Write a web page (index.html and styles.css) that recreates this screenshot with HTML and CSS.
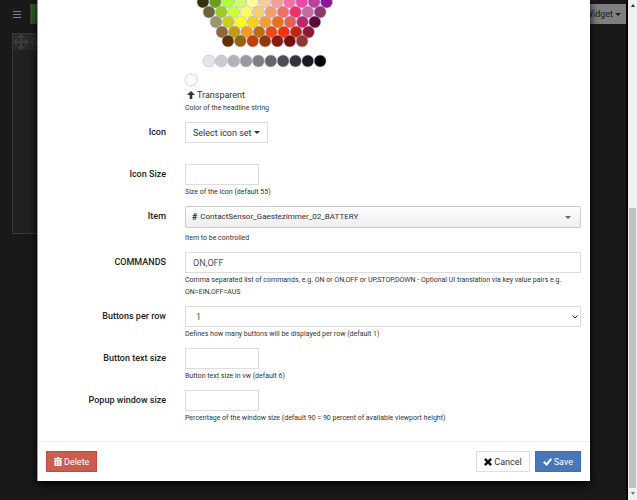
FILE: index.html
```html
<!doctype html>
<html lang="en">
<head>
    <meta charset="UTF-8">
    <meta name="viewport" content="width=device-width, initial-scale=1.0">
    <title>Widget settings</title>
    <link rel="stylesheet" href="styles.css">
</head>
<body>
<div class="page">
    <header class="navbar">
        <button type="button" class="menu" aria-label="Menu"><span></span><span></span><span></span></button>
        <button type="button" class="nav-run" aria-label="Run"></button>
        <button type="button" class="nav-add">Widget <i class="caret"></i></button>
    </header>
    <section class="widget">
        <div class="widget-head">
            <svg width="16" height="16" viewBox="0 0 16 16"><path d="M8 0l4 4h-3v3h3V4l4 4-4 4V9H9v3h3l-4 4-4-4h3V9H4v3L0 8l4-4v3h3V4H4z"/></svg>
            <span>Gaestezimmer</span>
        </div>
    </section>
</div>

<form class="modal">
    <div class="modal-body">
        <div class="row">
            <span class="label"></span>
            <div class="field">
                <svg class="palette" width="150" height="89" viewBox="0 0 150 89">
                    <g id="colors"></g>
                </svg>
                <button type="button" class="transparent">
                    <svg width="8" height="9" viewBox="0 0 8 9"><path d="M4 0l4 4H5.300v4H2.700V4H0z"/></svg>
                    Transparent
                </button>
                <p class="help">Color of the headline string</p>
            </div>
        </div>
        <div class="row">
            <label for="icon">Icon</label>
            <div class="field field-icon">
                <button type="button" id="icon" class="btn">Select icon set <i class="caret"></i></button>
            </div>
        </div>
        <div class="row">
            <label for="size">Icon Size</label>
            <div class="field">
                <input type="text" id="size" class="control short">
                <p class="help">Size of the icon (default 55)</p>
            </div>
        </div>
        <div class="row">
            <label for="item">Item</label>
            <div class="field">
                <button type="button" id="item" class="item">
                    <b>#</b>
                    <span>ContactSensor_Gaestezimmer_02_BATTERY</span>
                    <i class="caret"></i>
                </button>
                <p class="help">Item to be controlled</p>
            </div>
        </div>
        <div class="row">
            <label for="commands">COMMANDS</label>
            <div class="field">
                <input type="text" id="commands" class="control" value="ON,OFF">
                <p class="help">Comma separated list of commands, e.g. ON or ON,OFF or UP,STOP,DOWN - Optional UI translation via key value pairs e.g. ON=EIN,OFF=AUS</p>
            </div>
        </div>
        <div class="row">
            <label for="columns">Buttons per row</label>
            <div class="field">
                <div class="select">
                    <select id="columns" class="control"><option>1</option><option>2</option><option>3</option></select>
                    <svg width="6" height="4" viewBox="0 0 6 4"><path d="M.5.500L3 3 5.500.500"/></svg>
                </div>
                <p class="help">Defines how many buttons will be displayed per row (default 1)</p>
            </div>
        </div>
        <div class="row">
            <label for="text">Button text size</label>
            <div class="field">
                <input type="text" id="text" class="control short">
                <p class="help">Button text size in vw (default 6)</p>
            </div>
        </div>
        <div class="row">
            <label for="popup">Popup window size</label>
            <div class="field">
                <input type="text" id="popup" class="control short">
                <p class="help">Percentage of the window size (default 90 = 90 percent of available viewport height)</p>
            </div>
        </div>
    </div>
    <div class="modal-footer">
        <button type="button" class="btn btn-danger">
            <svg width="8" height="10" viewBox="0 0 8 10"><path d="M3 0h2v1h3v1.500H0V1h3zM.5 3h7v6h-7z"/><path class="bars" d="M2.500 4v4M4 4v4M5.500 4v4"/></svg>
            Delete
        </button>
        <button type="button" class="btn btn-cancel">
            <svg width="8" height="8" viewBox="0 0 8 8"><path d="M0 1.800L1.800 0 4 2.200 6.200 0 8 1.800 5.800 4 8 6.200 6.200 8 4 5.800 1.800 8 0 6.200 2.200 4z"/></svg>
            Cancel
        </button>
        <button type="submit" class="btn btn-primary">
            <svg width="9" height="8" viewBox="0 0 9 8"><path d="M0 4.500L1.500 3l2 2L7.500 0 9 1.400 3.700 8z"/></svg>
            Save
        </button>
    </div>
</form>

<div class="scrollbar">
    <i class="arrow up"></i>
    <div class="thumb"></div>
    <i class="arrow down"></i>
</div>

<script>
    //one entry per line of swatches: x of the first one, y, colors
    var rows = [
        [18, 2, '#333300 #6f9d12 #adff3f #d2ff68 #ffff99 #f5ce9a #f3a09a #f56fa2 #f0479e #c23d9a #8c159b'],
        [24, 12, '#666633 #a0cc1a #ccff33 #ffff66 #f8ce68 #f39f68 #f07068 #ee3368 #c06d9c #8f3866'],
        [31, 22, '#999966 #cccc1a #ffff1f #f8d01c #f39d34 #f07010 #ee5c50 #bf2668 #5c0c34'],
        [37, 32, '#906835 #c49a10 #f49d1c #c06c0c #f04a0c #f03408 #bd280c #8c1a33'],
        [43, 41, '#5c3300 #906808 #bf4008 #8f3a04 #8c1a06 #741004 #8f3833'],
        [24, 61, '#e6e6e6 #cccccc #b3b3b3 #999999 #808080 #666666 #4d4d4d #333333 #1a1a1a #000000'],
        [6, 80, '#ffffff']
    ];
    var box = document.querySelector('#colors');

    for(var i=0;i<rows.length;i++){
        var colors = rows[i][2].split(' ');
        for(var j=0;j<colors.length;j++){
            var dot = document.createElementNS('http://www.w3.org/2000/svg','circle');
            dot.setAttribute('cx', rows[i][0] + j*12.35);
            dot.setAttribute('cy', rows[i][1]);
            dot.setAttribute('r', 6);
            dot.setAttribute('fill', colors[j]);
            box.appendChild(dot);
        }
    }
</script>
</body>
</html>
```

FILE: styles.css
```css
*{
    box-sizing: border-box;
}
body{
    margin:0;
    min-height:100vh;
    background-color: #191919;
    font:9px/12px Roboto,"Liberation Sans",sans-serif;
    color:#333;
    overflow: hidden;
}
button,input,select{
    font:inherit;
    color:inherit;
    margin:0;
}
button{
    cursor:pointer;
    white-space: nowrap;
}
svg{
    display: block;
    flex:none;
    fill:currentColor;
}
.caret{
    flex:none;
    border:3px solid transparent;
    border-top-color:currentColor;
    border-bottom:0;
}

/* dimmed dashboard */
.page{
    position: absolute;
    inset:0 9px 0 0;
    border-right:2px solid #050505;
}
.navbar{
    display: flex;
    align-items: center;
    gap:9px;
    padding:4px 0 0 13px;
}
.menu{
    display: grid;
    gap:2px;
    width:8px;
    border:0;
    padding:0;
    background: none;
}
.menu span{
    height:1px;
    background-color: #7b7f86;
}
.nav-run{
    width:30px;
    height:20px;
    border:1px solid #2b5220;
    background-color: #37602a;
}
.nav-add{
    display: flex;
    align-items: center;
    gap:2px;
    height:20px;
    margin-left: auto;
    border:0;
    padding:0 5px;
    background-color: #7f7f7f;
    color:#1c1c22;
}
.widget{
    width:300px;
    height:201px;
    margin:9px 12px;
    border:1px solid #35373b;
    background-color: #202020;
}
.widget-head{
    display: flex;
    align-items: center;
    gap:2px;
    height:16px;
    background-color: #292a2c;
    color:#3c3c3c;
}

/* dialog */
.modal{
    position: relative;
    margin:0 47px 0 37px;
    border-left:1px solid #999;
    background-color: #fff;
    box-shadow: 0 3px 9px #000;
}
.modal-body{
    padding:0 9px 9px 8px;
}
.row{
    display: grid;
    grid-template-columns: 120px 1fr;
    gap:19px;
    padding-bottom:8px;
}
.row label{
    padding-top:4px;
    text-align: right;
    font-weight: 500;
    color:#222;
}
.palette{
    stroke:#b4b4f0;
    stroke-width:.6;
}
.transparent{
    display: flex;
    align-items: center;
    gap:2px;
    height:12px;
    border:0;
    padding:0 2px;
    background: none;
}
.help{
    margin:0;
    padding-top:1px;
    font-size:7px;
    color:#333;
}
.btn{
    display: flex;
    align-items: center;
    gap:2px;
    height:21px;
    border:1px solid #ddd;
    padding:0 7px;
    background-color: #fff;
}
.field-icon{
    padding-bottom:13px;
}
.control{
    display: block;
    width:100%;
    height:21px;
    border:1px solid #ddd;
    border-radius:0;
    padding:0 7px;
    background-color: #fff;
    color:#555;
}
.short{
    width:74px;
}
.select{
    position: relative;
}
.select select{
    appearance: none;
    padding:0 10px;
}
.select svg{
    position: absolute;
    right:3px;
    top:9px;
    fill:none;
    stroke:#222;
}
.item{
    display: flex;
    align-items: center;
    gap:3px;
    width:100%;
    height:22px;
    margin-bottom:3px;
    border:1px solid #ccc;
    border-radius:2px;
    padding:0 9px 0 6px;
    background: linear-gradient(#fff,#eee);
    font-size:8px;
}
.item b{
    font-size:9px;
}
.item .caret{
    margin-left: auto;
    color:#666;
}
.modal-footer{
    display: flex;
    gap:5px;
    border-top:1px solid #eee;
    padding:9px 9px 9px 8px;
}
.btn-cancel{
    margin-left: auto;
}
.btn-cancel svg{
    color:#111;
}
.btn-danger{
    border-color:#c9463b;
    background-color: #ca5d50;
    color:#fff;
}
.bars{
    stroke:#ca5d50;
    stroke-width:.5;
}
.btn-primary{
    border-color:#3f6fb0;
    background-color: #4876b8;
    color:#fff;
}

/* page scrollbar */
.scrollbar{
    position: fixed;
    inset:0 0 0 auto;
    display: flex;
    flex-direction: column;
    align-items: center;
    width:9px;
    padding:4px 0 5px;
    background-color: #f1f1f1;
}
.thumb{
    width:7px;
    height:57%;
    margin:auto 0 4px;
    background-color: #c1c1c1;
}
.arrow{
    border:2px solid transparent;
}
.up{
    border-top:0;
    border-bottom:3px solid #333;
}
.down{
    border-bottom:0;
    border-top:3px solid #777;
}
```
